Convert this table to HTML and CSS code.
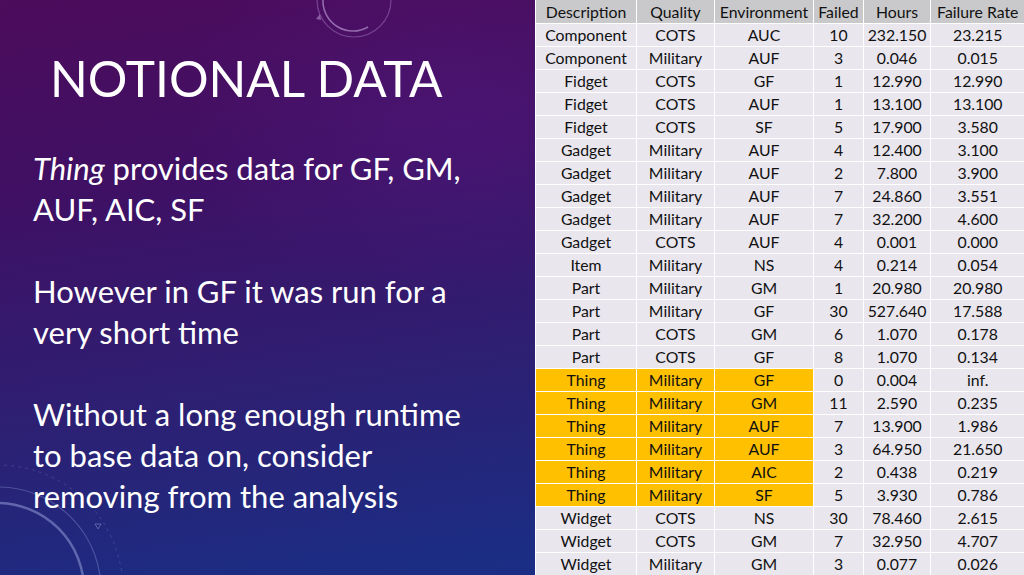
FILE: index.html
```html
<!DOCTYPE html>
<html>
<head>
<meta charset="utf-8">
<link rel="stylesheet" href="styles.css">
</head>
<body>
<div class="slide">
  <svg class="deco" width="535" height="575" viewBox="0 0 535 575">
    <circle cx="354" cy="0" r="37" fill="none" stroke="rgba(200,170,230,0.35)" stroke-width="1.2"/>
    <path d="M 323 0 A 30 30 0 0 0 368 27" fill="none" stroke="rgba(210,180,235,0.55)" stroke-width="1.6"/>
    <path d="M 316 19 l 4 -5 l 1 6 z" fill="rgba(200,170,230,0.5)"/>
    <circle cx="-3" cy="590" r="87" fill="none" stroke="rgba(170,180,235,0.45)" stroke-width="2.5"/>
    <circle cx="-2" cy="590" r="103" fill="none" stroke="rgba(170,180,235,0.3)" stroke-width="1.2"/>
    <circle cx="-2" cy="590" r="125" fill="none" stroke="rgba(170,180,235,0.2)" stroke-width="1" stroke-dasharray="3 4"/>
    <path d="M 95 524 l 6 0 l -3 5 z" fill="none" stroke="rgba(170,180,235,0.4)" stroke-width="1"/>
  </svg>
  <section class="left">
    <h1 class="title">NOTIONAL DATA</h1>
    <div class="body">
      <p><em>Thing</em> provides data for GF, GM, AUF, AIC, SF</p>
      <p>However in GF it was run for a very short time</p>
      <p>Without a long enough runtime to base data on, consider removing from the analysis</p>
    </div>
  </section>
  <section class="right">
    <table class="data">
      <colgroup>
        <col class="c1"><col class="c2"><col class="c3"><col class="c4"><col class="c5"><col class="c6">
      </colgroup>
      <thead>
        <tr><th>Description</th><th>Quality</th><th>Environment</th><th>Failed</th><th>Hours</th><th>Failure Rate</th></tr>
      </thead>
      <tbody>
        <tr><td>Component</td><td>COTS</td><td>AUC</td><td>10</td><td>232.150</td><td>23.215</td></tr>
        <tr><td>Component</td><td>Military</td><td>AUF</td><td>3</td><td>0.046</td><td>0.015</td></tr>
        <tr><td>Fidget</td><td>COTS</td><td>GF</td><td>1</td><td>12.990</td><td>12.990</td></tr>
        <tr><td>Fidget</td><td>COTS</td><td>AUF</td><td>1</td><td>13.100</td><td>13.100</td></tr>
        <tr><td>Fidget</td><td>COTS</td><td>SF</td><td>5</td><td>17.900</td><td>3.580</td></tr>
        <tr><td>Gadget</td><td>Military</td><td>AUF</td><td>4</td><td>12.400</td><td>3.100</td></tr>
        <tr><td>Gadget</td><td>Military</td><td>AUF</td><td>2</td><td>7.800</td><td>3.900</td></tr>
        <tr><td>Gadget</td><td>Military</td><td>AUF</td><td>7</td><td>24.860</td><td>3.551</td></tr>
        <tr><td>Gadget</td><td>Military</td><td>AUF</td><td>7</td><td>32.200</td><td>4.600</td></tr>
        <tr><td>Gadget</td><td>COTS</td><td>AUF</td><td>4</td><td>0.001</td><td>0.000</td></tr>
        <tr><td>Item</td><td>Military</td><td>NS</td><td>4</td><td>0.214</td><td>0.054</td></tr>
        <tr><td>Part</td><td>Military</td><td>GM</td><td>1</td><td>20.980</td><td>20.980</td></tr>
        <tr><td>Part</td><td>Military</td><td>GF</td><td>30</td><td>527.640</td><td>17.588</td></tr>
        <tr><td>Part</td><td>COTS</td><td>GM</td><td>6</td><td>1.070</td><td>0.178</td></tr>
        <tr><td>Part</td><td>COTS</td><td>GF</td><td>8</td><td>1.070</td><td>0.134</td></tr>
        <tr class="hl"><td>Thing</td><td>Military</td><td>GF</td><td>0</td><td>0.004</td><td>inf.</td></tr>
        <tr class="hl"><td>Thing</td><td>Military</td><td>GM</td><td>11</td><td>2.590</td><td>0.235</td></tr>
        <tr class="hl"><td>Thing</td><td>Military</td><td>AUF</td><td>7</td><td>13.900</td><td>1.986</td></tr>
        <tr class="hl"><td>Thing</td><td>Military</td><td>AUF</td><td>3</td><td>64.950</td><td>21.650</td></tr>
        <tr class="hl"><td>Thing</td><td>Military</td><td>AIC</td><td>2</td><td>0.438</td><td>0.219</td></tr>
        <tr class="hl"><td>Thing</td><td>Military</td><td>SF</td><td>5</td><td>3.930</td><td>0.786</td></tr>
        <tr><td>Widget</td><td>COTS</td><td>NS</td><td>30</td><td>78.460</td><td>2.615</td></tr>
        <tr><td>Widget</td><td>COTS</td><td>GM</td><td>7</td><td>32.950</td><td>4.707</td></tr>
        <tr><td>Widget</td><td>Military</td><td>GM</td><td>3</td><td>0.077</td><td>0.026</td></tr>
      </tbody>
    </table>
  </section>
</div>
</body>
</html>
```

FILE: styles.css
```css
html, body {
  margin: 0;
  padding: 0;
  width: 1024px;
  height: 575px;
  overflow: hidden;
}

.slide {
  position: relative;
  width: 1024px;
  height: 575px;
  display: flex;
  font-family: Lato, "Noto Sans", sans-serif;
  background:
    radial-gradient(ellipse 420px 260px at 460px 120px, rgba(90, 30, 140, 0.35), rgba(90, 30, 140, 0) 70%),
    linear-gradient(172deg, #4d0c5c 0%, #3f1064 28%, #2e1f72 58%, #1c2c82 85%, #17308a 100%);
}

.deco {
  position: absolute;
  left: 0;
  top: 0;
  pointer-events: none;
}

.left {
  position: relative;
  width: 535px;
  flex: none;
  padding: 0 0 0 33px;
  box-sizing: border-box;
  color: #ffffff;
}

.title {
  margin: 48px 0 0 17px;
  font-weight: 400;
  font-size: 49.5px;
  line-height: 60px;
  letter-spacing: 0;
}

.body {
  margin-top: 40px;
  font-size: 31px;
  line-height: 41px;
}

.body p {
  margin: 0 0 41px 0;
  width: 442px;
}

.body em {
  font-style: italic;
}

.right {
  flex: 1;
  position: relative;
}

.data {
  border-collapse: collapse;
  table-layout: fixed;
  width: 489px;
  font-size: 15.8px;
  color: #111111;
}

.c1 { width: 101px; }
.c2 { width: 78px; }
.c3 { width: 99px; }
.c4 { width: 50px; }
.c5 { width: 67px; }
.c6 { width: 94px; }

.data th,
.data td {
  height: 23px;
  padding: 0;
  box-sizing: border-box;
  text-align: center;
  vertical-align: middle;
  border: 1px solid #ffffff;
  white-space: nowrap;
  line-height: 21px;
}

.data th {
  font-weight: 400;
  background: #c9c9cb;
  border-top: none;
}

.data td {
  background: #e9e6ee;
}

.data tr:last-child td {
  border-bottom: none;
}

.data th:last-child,
.data td:last-child {
  border-right: none;
}

.data tr.hl td:nth-child(-n+3) {
  background: #ffc000;
}
```
